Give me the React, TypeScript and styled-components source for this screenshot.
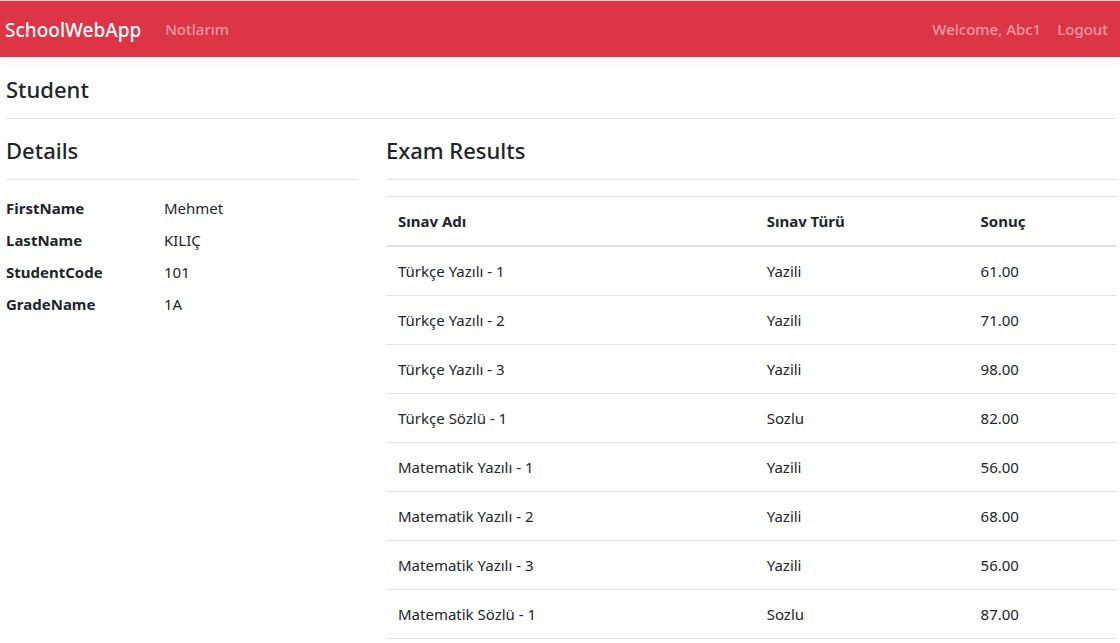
import React from "react";
import styled, { createGlobalStyle } from "styled-components";

const GlobalStyle = createGlobalStyle`
  *, *::before, *::after { box-sizing: border-box; }
  body {
    margin: 0;
    background: #fff;
    color: #212529;
    font-family: "Segoe UI", "Noto Sans", "Open Sans", sans-serif;
    font-size: 15px;
    font-weight: 400;
    line-height: 24px;
  }
`;

const Navbar = styled.header`
  display: flex;
  align-items: center;
  justify-content: space-between;
  height: 58px;
  padding: 0 12px 0 5px;
  border-top: 1px solid #d0d0d0;
  border-bottom: 1px solid #dee2e6;
  background: #dc3545;
  box-shadow: 0 4px 12px rgba(0, 0, 0, 0.05);
`;

const NavGroup = styled.nav`
  display: flex;
  align-items: center;
  gap: 16px;
`;

const Brand = styled.a`
  margin-right: 8px;
  padding-top: 2px;
  color: #fff;
  font-size: 19px;
  font-weight: 500;
  line-height: 30px;
  text-decoration: none;
`;

const NavLink = styled.a`
  color: rgba(255, 255, 255, 0.5);
  font-weight: 500;
  text-decoration: none;
`;

const Page = styled.main`
  padding: 16px 4px 0 6px;
`;

const Title = styled.h1`
  margin: 0;
  padding-bottom: 14px;
  border-bottom: 1px solid #e5e5e5;
  font-size: 22px;
  font-weight: 500;
  line-height: 30px;
`;

const Columns = styled.div`
  display: grid;
  grid-template-columns: 350fr 730fr;
  gap: 30px;
  padding-top: 16px;
`;

const DetailList = styled.dl`
  display: grid;
  grid-template-columns: 158px 1fr;
  row-gap: 8px;
  margin: 16px 0 0;
`;

const Term = styled.dt`
  font-weight: 700;
`;

const Value = styled.dd`
  margin: 0;
`;

const Table = styled.table`
  width: 100%;
  margin-top: 16px;
  border-collapse: collapse;
  table-layout: fixed;
`;

const HeadCell = styled.th<{ $width?: string }>`
  width: ${(p) => p.$width ?? "auto"};
  padding: 12px;
  border-top: 1px solid #dee2e6;
  border-bottom: 2px solid #dee2e6;
  font-weight: 700;
  text-align: left;
`;

const Cell = styled.td`
  padding: 12px;
  border-bottom: 1px solid #dee2e6;
`;

const details = [
  ["FirstName", "Mehmet"],
  ["LastName", "KILIÇ"],
  ["StudentCode", "101"],
  ["GradeName", "1A"],
];

const results = [
  ["Türkçe Yazılı - 1", "Yazili", "61.00"],
  ["Türkçe Yazılı - 2", "Yazili", "71.00"],
  ["Türkçe Yazılı - 3", "Yazili", "98.00"],
  ["Türkçe Sözlü - 1", "Sozlu", "82.00"],
  ["Matematik Yazılı - 1", "Yazili", "56.00"],
  ["Matematik Yazılı - 2", "Yazili", "68.00"],
  ["Matematik Yazılı - 3", "Yazili", "56.00"],
  ["Matematik Sözlü - 1", "Sozlu", "87.00"],
];

export default function App() {
  return (
    <>
      <GlobalStyle />
      <Navbar>
        <NavGroup>
          <Brand href="#">SchoolWebApp</Brand>
          <NavLink href="#">Notlarım</NavLink>
        </NavGroup>
        <NavGroup>
          <NavLink href="#">Welcome, Abc1</NavLink>
          <NavLink href="#">Logout</NavLink>
        </NavGroup>
      </Navbar>
      <Page>
        <Title>Student</Title>
        <Columns>
          <section>
            <Title as="h2">Details</Title>
            <DetailList>
              {details.map(([term, value]) => (
                <React.Fragment key={term}>
                  <Term>{term}</Term>
                  <Value>{value}</Value>
                </React.Fragment>
              ))}
            </DetailList>
          </section>
          <section>
            <Title as="h2">Exam Results</Title>
            <Table>
              <thead>
                <tr>
                  <HeadCell scope="col">Sınav Adı</HeadCell>
                  <HeadCell scope="col" $width="29.3%">Sınav Türü</HeadCell>
                  <HeadCell scope="col" $width="20.2%">Sonuç</HeadCell>
                </tr>
              </thead>
              <tbody>
                {results.map(([name, kind, score]) => (
                  <tr key={name}>
                    <Cell>{name}</Cell>
                    <Cell>{kind}</Cell>
                    <Cell>{score}</Cell>
                  </tr>
                ))}
              </tbody>
            </Table>
          </section>
        </Columns>
      </Page>
    </>
  );
}
